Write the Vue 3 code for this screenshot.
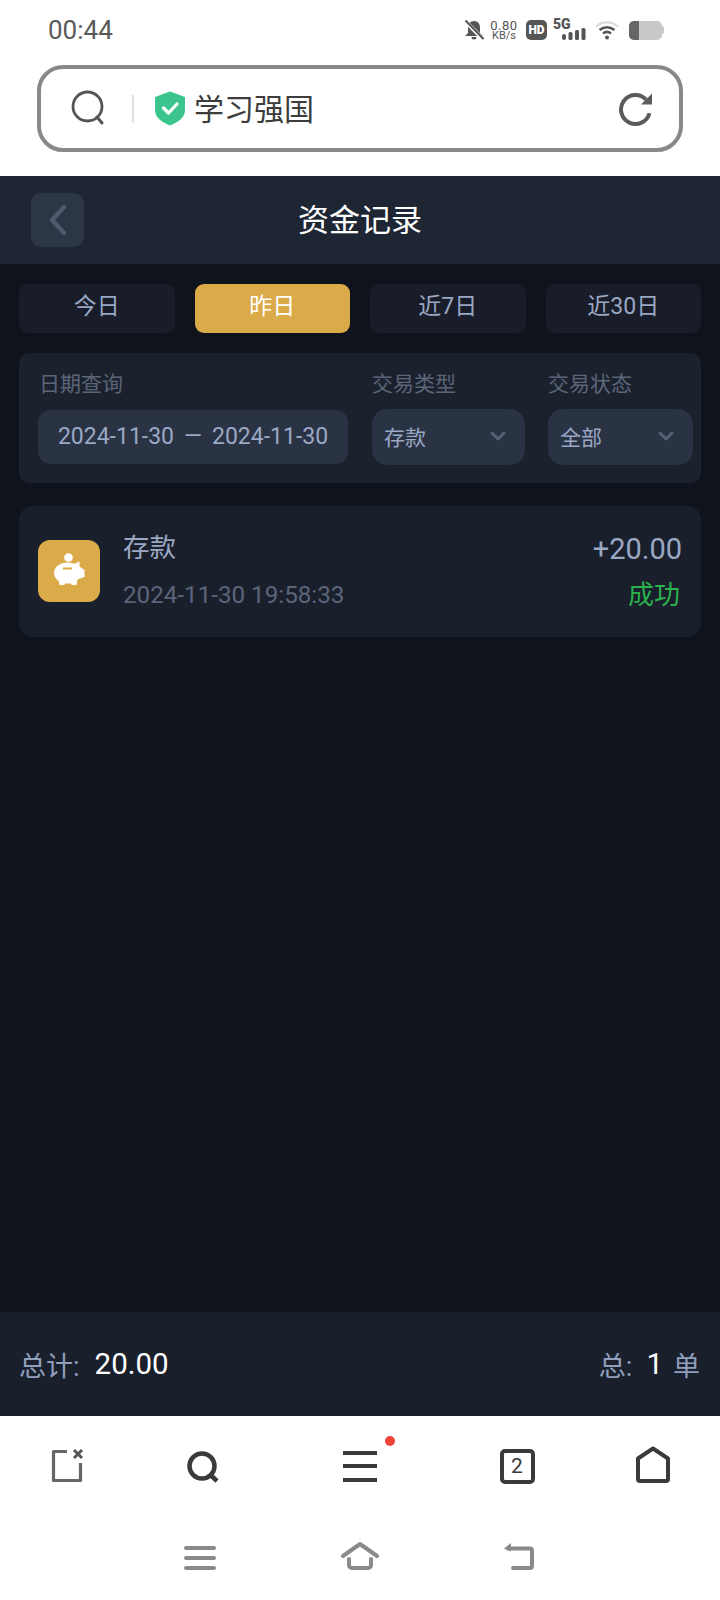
<template>
  <div class="page">
    <div class="status">
      <span class="time">00:44</span>
      <div class="status-icons">
        <svg class="bell" width="20" height="20" viewBox="0 0 20 20">
          <path d="M10 1c-4 0-6 3-6 7v5l-3 3h18l-3-3V8c0-4-2-7-6-7z" fill="#555" />
          <path d="M7.500 17a2.500 2.500 0 0 0 5 0z" fill="#555" />
          <path d="M1 1l18 18" stroke="#fff" stroke-width="4" />
          <path d="M1.500 0.500l18 18.500" stroke="#555" stroke-width="2" />
        </svg>
        <div class="speed">
          <span>0.80</span>
          <span class="speed-unit">KB/s</span>
        </div>
        <span class="hd">HD</span>
        <div class="signal">
          <span class="five-g">5G</span>
          <svg width="24" height="12" viewBox="0 0 24 12">
            <rect x="0" y="6" width="4" height="6" rx="2" fill="#555" />
            <rect x="6.500" y="4" width="4" height="8" rx="1.500" fill="#555" />
            <rect x="13" y="2" width="4" height="10" rx="1.500" fill="#555" />
            <rect x="19.500" y="0" width="4" height="12" rx="1.500" fill="#555" />
          </svg>
        </div>
        <svg class="wifi" width="24" height="20" viewBox="0 0 24 20" fill="none">
          <path d="M1 6.500c6.500-5.500 15.500-5.500 22 0" stroke="#ddd" stroke-width="2.200" />
          <path d="M4.500 10c4.500-3.800 10.500-3.800 15 0" stroke="#555" stroke-width="2.500" />
          <path d="M8 13.500c2.500-2 5.500-2 8 0" stroke="#555" stroke-width="2.500" />
          <circle cx="12" cy="17.500" r="2" fill="#555" />
        </svg>
        <div class="battery">
          <span class="battery-level"></span>
        </div>
        <span class="battery-nub"></span>
      </div>
    </div>

    <div class="browser-bar">
      <div class="address">
        <svg class="search-icon" width="36" height="36" viewBox="0 0 36 36" fill="none">
          <circle cx="17.500" cy="16.500" r="14.500" stroke="#555" stroke-width="2.800" />
          <path d="M27 27l5 6" stroke="#555" stroke-width="3" stroke-linecap="round" />
        </svg>
        <span class="address-divider"></span>
        <svg width="32" height="35" viewBox="0 0 32 35">
          <path d="M16 0.500l15 5.500v13c0 7.500-7 12.500-15 15.500C8 31.500 1 26.500 1 19V6z" fill="#3cc48f" />
          <path d="M9.500 17l5 5 8.500-9" fill="none" stroke="#fff" stroke-width="3.200" stroke-linecap="round" stroke-linejoin="round" />
        </svg>
        <span class="site-name">学习强国</span>
        <svg class="reload" width="36" height="36" viewBox="0 0 36 36" fill="none">
          <path d="M32.500 22.300A14.500 14.500 0 1 1 29 8.500" stroke="#5c5c5c" stroke-width="4" />
          <path d="M35 2.500V13.500H24z" fill="#5c5c5c" />
        </svg>
      </div>
    </div>

    <header class="header">
      <button class="back">
        <svg width="20" height="30" viewBox="0 0 20 30" fill="none">
          <path d="M16 2L4 15l12 13" stroke="#4f5a6d" stroke-width="4.500" stroke-linecap="round" stroke-linejoin="round" />
        </svg>
      </button>
      <h1>资金记录</h1>
      <span></span>
    </header>

    <main class="content">
      <div class="tabs">
        <div
          v-for="tab in tabs"
          :key="tab"
          class="tab"
          :class="{ active: tab === activeTab }"
        >{{ tab }}</div>
      </div>

      <div class="filters">
        <div class="field date-field">
          <label>日期查询</label>
          <div class="date-input">
            <span>2024-11-30</span>
            <span class="dash">—</span>
            <span>2024-11-30</span>
          </div>
        </div>
        <div class="field type-field">
          <label>交易类型</label>
          <div class="select">
            <span>存款</span>
            <svg width="16" height="10" viewBox="0 0 16 10" fill="none">
              <path d="M2 2l6 6 6-6" stroke="#566074" stroke-width="3" stroke-linecap="round" stroke-linejoin="round" />
            </svg>
          </div>
        </div>
        <div class="field state-field">
          <label>交易状态</label>
          <div class="select">
            <span>全部</span>
            <svg width="16" height="10" viewBox="0 0 16 10" fill="none">
              <path d="M2 2l6 6 6-6" stroke="#566074" stroke-width="3" stroke-linecap="round" stroke-linejoin="round" />
            </svg>
          </div>
        </div>
      </div>

      <div class="record">
        <div class="record-icon">
          <svg width="62" height="62" viewBox="0 0 62 62">
            <circle cx="30.500" cy="17.500" r="4.300" fill="#fff" />
            <ellipse cx="29.500" cy="33" rx="13.500" ry="10.500" fill="#fff" />
            <path d="M36 24l5.500-2.500v5l5 3.500v7l-6 2-6-6z" fill="#fff" />
            <rect x="21" y="38" width="6" height="7" rx="1.500" fill="#fff" />
            <rect x="33" y="38" width="6" height="7" rx="1.500" fill="#fff" />
            <rect x="25" y="27.500" width="9" height="2" fill="#dbab4a" />
          </svg>
        </div>
        <div class="record-main">
          <div class="record-title">存款</div>
          <div class="record-date">2024-11-30 19:58:33</div>
        </div>
        <div class="record-side">
          <div class="record-amount">+20.00</div>
          <div class="record-state">成功</div>
        </div>
      </div>
    </main>

    <footer class="summary">
      <div>
        <span class="summary-label">总计:</span>
        <span class="summary-value total">20.00</span>
      </div>
      <div>
        <span class="summary-label">总:</span>
        <span class="summary-value count">1</span>
        <span class="summary-label">单</span>
      </div>
    </footer>

    <nav class="browser-nav">
      <svg width="36" height="38" viewBox="0 0 36 38" fill="none">
        <path d="M18 4.500H4.500V33.500H31.500V16" stroke="#666" stroke-width="3.200" stroke-linejoin="round" />
        <path d="M25 3l8 8M33 3l-8 8" stroke="#555" stroke-width="3" />
      </svg>
      <svg width="38" height="38" viewBox="0 0 38 38" fill="none">
        <circle cx="18" cy="19" r="12.500" stroke="#3a3a3a" stroke-width="4.500" />
        <path d="M27 28.500l6 5.500" stroke="#3a3a3a" stroke-width="4.500" />
      </svg>
      <div class="menu-wrap">
        <svg width="36" height="36" viewBox="0 0 36 36" fill="none">
          <path d="M1 5h34M1 18h34M1 32h34" stroke="#3a3a3a" stroke-width="4" />
        </svg>
        <span class="menu-dot"></span>
      </div>
      <div class="tab-count">2</div>
      <svg width="38" height="40" viewBox="0 0 38 40" fill="none">
        <path d="M19 2.500L34 12.500V33a2 2 0 0 1-2 2H6a2 2 0 0 1-2-2V12.500z" stroke="#3a3a3a" stroke-width="4" stroke-linejoin="round" />
      </svg>
    </nav>

    <div class="system-nav">
      <svg width="32" height="26" viewBox="0 0 32 26" fill="none">
        <path d="M2 3h28M2 13h28M2 23h28" stroke="#8a8a8a" stroke-width="4" stroke-linecap="round" />
      </svg>
      <svg width="40" height="32" viewBox="0 0 40 32" fill="none">
        <path d="M3 14L20 2l17 12" stroke="#8a8a8a" stroke-width="4" stroke-linecap="round" stroke-linejoin="round" />
        <path d="M9 17v6a3 3 0 0 0 3 3h16a3 3 0 0 0 3-3v-6" stroke="#8a8a8a" stroke-width="4" stroke-linecap="round" />
      </svg>
      <svg width="36" height="32" viewBox="0 0 36 32" fill="none">
        <path d="M6 6.500H28a2 2 0 0 1 2 2V24a2 2 0 0 1-2 2H11" stroke="#8a8a8a" stroke-width="4" stroke-linecap="round" />
        <path d="M2 6.500L9 1v8.500z" fill="#8a8a8a" />
      </svg>
    </div>
  </div>
</template>

<script setup>
const tabs = ['今日', '昨日', '近7日', '近30日']
const activeTab = '昨日'
</script>

<style>
body {
  background: #fff;
}
</style>

<style scoped>
.page {
  width: 720px;
  height: 1600px;
  display: flex;
  flex-direction: column;
  font-family: Roboto, "Noto Sans CJK SC", sans-serif;
  background: #0f131c;
  overflow: hidden;
}

.status {
  height: 60px;
  background: #fff;
  display: flex;
  align-items: center;
  justify-content: space-between;
  padding: 0 56px 0 48px;
  box-sizing: border-box;
}

.time {
  font-size: 26px;
  color: #5a5a5a;
}

.status-icons {
  display: flex;
  align-items: center;
  color: #555;
}

.speed {
  display: flex;
  flex-direction: column;
  align-items: center;
  font-size: 13px;
  letter-spacing: 0.500px;
  line-height: 11px;
  margin-left: 6px;
  width: 28px;
}

.speed-unit {
  font-size: 11px;
  letter-spacing: 0;
  line-height: 10px;
}

.hd {
  margin-left: 8px;
  width: 21px;
  height: 20px;
  border-radius: 5px;
  background: #555;
  color: #fff;
  font-size: 12px;
  font-weight: 900;
  line-height: 20px;
  text-align: center;
}

.signal {
  margin-left: 8px;
  width: 31px;
  height: 20px;
  position: relative;
}

.five-g {
  position: absolute;
  top: -2px;
  left: -2px;
  font-size: 14px;
  line-height: 13px;
  font-weight: 900;
}

.signal svg {
  position: absolute;
  right: 0;
  bottom: 0;
}

.wifi {
  margin-left: 9px;
}

.battery {
  margin-left: 10px;
  width: 33px;
  height: 19px;
  border-radius: 5px;
  background: #c9c9c9;
  overflow: hidden;
}

.battery-level {
  display: block;
  width: 10px;
  height: 100%;
  background: #666;
}

.battery-nub {
  width: 2px;
  height: 8px;
  background: #c9c9c9;
  border-radius: 0 2px 2px 0;
}

.browser-bar {
  height: 116px;
  background: #fff;
  padding: 5px 37px 0;
  box-sizing: border-box;
}

.address {
  height: 87px;
  border: 4px solid #888;
  border-radius: 26px;
  box-sizing: border-box;
  display: flex;
  align-items: center;
  padding: 0 26px 0 29px;
}

.search-icon {
  margin-bottom: 2px;
}

.address-divider {
  width: 2px;
  height: 28px;
  background: #e2e2e2;
  margin: 0 20px 0 26px;
}

.site-name {
  margin: 0 0 4px 8px;
  font-size: 30px;
  color: #3c3c3c;
}

.reload {
  margin-left: auto;
}

.header {
  height: 88px;
  background: #1e2533;
  display: grid;
  grid-template-columns: 1fr auto 1fr;
  align-items: center;
  padding: 0 31px;
}

.header h1 {
  margin: 0 0 6px;
  font-size: 31px;
  font-weight: 400;
  color: #fff;
}

.back {
  width: 53px;
  height: 54px;
  border: none;
  border-radius: 10px;
  background: #2d3646;
  padding: 0;
  display: flex;
  align-items: center;
  justify-content: center;
}

.content {
  flex: 1;
  padding: 20px 19px 0;
}

.tabs {
  display: grid;
  grid-template-columns: repeat(4, 1fr);
  gap: 20px;
}

.tab {
  height: 49px;
  border-radius: 9px;
  background: #181d29;
  color: #9aa8c4;
  font-size: 23px;
  line-height: 46px;
  text-align: center;
}

.tab.active {
  background: #dbab4a;
  color: #fff;
}

.filters {
  height: 130px;
  margin-top: 20px;
  border-radius: 10px;
  background: #1c212e;
  display: flex;
  padding-left: 19px;
  box-sizing: border-box;
}

.field label {
  display: block;
  height: 56px;
  font-size: 21px;
  line-height: 62px;
  color: #5b6579;
}

.date-field {
  width: 310px;
}

.date-field label {
  padding-left: 1px;
}

.date-input {
  height: 54px;
  margin-top: 1px;
  padding-bottom: 2px;
  box-sizing: border-box;
  border-radius: 13px;
  background: #2a3344;
  color: #9aa8c4;
  font-size: 23px;
  display: flex;
  align-items: center;
  justify-content: center;
  gap: 10px;
}

.dash {
  font-size: 23px;
}

.select {
  height: 56px;
  box-sizing: border-box;
  border-radius: 15px;
  background: #2a3344;
  color: #9aa8c4;
  font-size: 21px;
  display: flex;
  align-items: center;
  justify-content: space-between;
  padding: 0 19px 3px 12px;
}

.type-field {
  width: 153px;
  margin-left: 24px;
}

.state-field {
  width: 145px;
  margin-left: 23px;
}

.record {
  height: 131px;
  margin-top: 23px;
  border-radius: 14px;
  background: #1a1f2c;
  display: flex;
  align-items: center;
  padding: 0 19px 0 19px;
}

.record-icon {
  width: 62px;
  height: 62px;
  margin-top: -1px;
  border-radius: 12px;
  background: #dbab4a;
}

.record-main {
  margin-left: 23px;
  flex: 1;
}

.record-title {
  font-size: 26.500px;
  line-height: 38px;
  color: #9aa8c4;
}

.record-date {
  margin-top: 9px;
  font-size: 24.200px;
  line-height: 38px;
  color: #5b6579;
}

.record-side {
  text-align: right;
}

.record-amount {
  font-size: 29px;
  line-height: 38px;
  color: #9aa8c4;
}

.record-state {
  margin: 8px 2px 0 0;
  font-size: 26px;
  line-height: 38px;
  color: #2bb24c;
}

.summary {
  height: 104px;
  background: #1a1f2c;
  display: flex;
  align-items: center;
  justify-content: space-between;
  padding: 0 20px 0 19px;
}

.summary > div {
  display: flex;
  align-items: center;
}

.summary-label {
  font-size: 27px;
  color: #8f9fbd;
}

.summary-value {
  font-size: 29.500px;
  color: #fff;
}

.total {
  margin-left: 15px;
}

.count {
  margin: 0 10px 0 14px;
}

.browser-nav {
  height: 100px;
  background: #fff;
  display: grid;
  grid-template-columns: 134px 138px 176px 138px 134px;
  align-items: center;
  justify-items: center;
}

.menu-wrap {
  position: relative;
  height: 36px;
}

.menu-dot {
  position: absolute;
  top: -12px;
  right: -17px;
  width: 10px;
  height: 10px;
  border-radius: 50%;
  background: #f04438;
}

.tab-count {
  width: 35px;
  height: 35px;
  border: 4px solid #3a3a3a;
  border-radius: 5px;
  box-sizing: border-box;
  color: #3a3a3a;
  font-size: 21px;
  line-height: 27px;
  text-align: center;
}

.system-nav {
  flex: 0 0 84px;
  background: #fff;
  display: grid;
  grid-template-columns: repeat(3, 160px);
  justify-content: center;
  align-items: center;
  justify-items: center;
}
</style>
